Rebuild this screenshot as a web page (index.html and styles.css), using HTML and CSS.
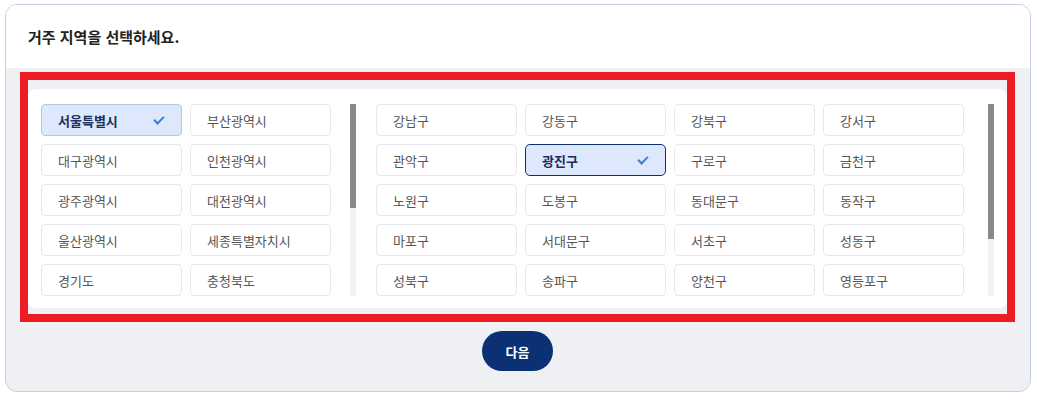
FILE: index.html
```html
<!DOCTYPE html>
<html lang="ko">
  <head>
    <meta charset="UTF-8" />
    <meta name="viewport" content="width=device-width, initial-scale=1.0" />
    <title>거주 지역 선택</title>
    <link rel="stylesheet" href="styles.css">
  </head>
  <body>
    <section class="card">
      <header class="card-head">
        <h1>거주 지역을 선택하세요.</h1>
      </header>
      <div class="card-body">
        <div class="highlight">
          <div class="picker">
            <div class="list list-sido">
              <div class="grid">
                <button class="opt is-parent">서울특별시<span class="check"></span></button>
                <button class="opt">부산광역시</button>
                <button class="opt">대구광역시</button>
                <button class="opt">인천광역시</button>
                <button class="opt">광주광역시</button>
                <button class="opt">대전광역시</button>
                <button class="opt">울산광역시</button>
                <button class="opt">세종특별자치시</button>
                <button class="opt">경기도</button>
                <button class="opt">충청북도</button>
              </div>
              <div class="scroll-track"><div class="scroll-thumb" style="height: 104px"></div></div>
            </div>
            <div class="list list-gu">
              <div class="grid">
                <button class="opt">강남구</button>
                <button class="opt">강동구</button>
                <button class="opt">강북구</button>
                <button class="opt">강서구</button>
                <button class="opt">관악구</button>
                <button class="opt is-selected">광진구<span class="check"></span></button>
                <button class="opt">구로구</button>
                <button class="opt">금천구</button>
                <button class="opt">노원구</button>
                <button class="opt">도봉구</button>
                <button class="opt">동대문구</button>
                <button class="opt">동작구</button>
                <button class="opt">마포구</button>
                <button class="opt">서대문구</button>
                <button class="opt">서초구</button>
                <button class="opt">성동구</button>
                <button class="opt">성북구</button>
                <button class="opt">송파구</button>
                <button class="opt">양천구</button>
                <button class="opt">영등포구</button>
              </div>
              <div class="scroll-track"><div class="scroll-thumb" style="height: 135px"></div></div>
            </div>
          </div>
        </div>
        <div class="actions">
          <button class="next">다음</button>
        </div>
      </div>
    </section>
  </body>
</html>
```

FILE: styles.css
```css
:root {
  font-family: "Noto Sans CJK KR", "Noto Sans", sans-serif;
  color: #222;
}

body {
  margin: 4px 6px 0 5px;
}

.card {
  border: 1px solid #c3cfe2;
  border-radius: 12px;
  overflow: hidden;
  background-color: #eff0f4;
}

.card-head {
  display: flex;
  align-items: center;
  height: 63px;
  padding-left: 22px;
  background-color: #fff;

  & h1 {
    margin: 0;
    font-size: 15px;
    font-weight: 700;
    color: #222;
  }
}

.card-body {
  padding: 4px 15px 20px 14px;
}

.highlight {
  border: 8px solid #ee1c25;
  padding: 9px 0 6px;
}

.picker {
  display: flex;
  gap: 20px;
  padding: 15px 13px 12px;
  background-color: #fff;
  border-radius: 8px;
}

.list {
  display: flex;
  justify-content: space-between;
  height: 192px;
}

.list-sido {
  width: 315px;

  & .grid {
    grid-template-columns: repeat(2, 141px);
  }
}

.list-gu {
  width: 618px;

  & .grid {
    grid-template-columns: repeat(4, 141px);
  }
}

.grid {
  display: grid;
  grid-auto-rows: 32px;
  align-content: start;
  gap: 8px;
}

.scroll-track {
  width: 6px;
  background-color: #f2f2f2;
}

.scroll-thumb {
  background-color: #898989;
}

.opt {
  display: flex;
  align-items: center;
  justify-content: space-between;
  padding: 0 17px 0 16px;
  font-family: inherit;
  font-size: 13px;
  color: #555;
  text-align: left;
  background-color: #fff;
  border: 1px solid #e6e8eb;
  border-radius: 4px;
  cursor: pointer;

  &.is-parent,
  &.is-selected {
    font-weight: 700;
    color: #1b2f5c;
    background-color: #dde8fc;
    border-color: #b3c7ea;
  }

  &.is-selected {
    border: 1.5px solid #0d2f6b;
    border-radius: 5px;
  }
}

.check {
  width: 8px;
  height: 4px;
  margin-bottom: 3px;
  border-left: 2px solid #3b7ddd;
  border-bottom: 2px solid #3b7ddd;
  transform: rotate(-45deg);
}

.actions {
  display: flex;
  justify-content: center;
  padding-top: 9px;
}

.next {
  width: 71px;
  height: 40px;
  font-family: inherit;
  font-size: 13px;
  font-weight: 700;
  color: #fff;
  background-color: #0b3174;
  border: 0;
  border-radius: 20px;
  cursor: pointer;
}
```
